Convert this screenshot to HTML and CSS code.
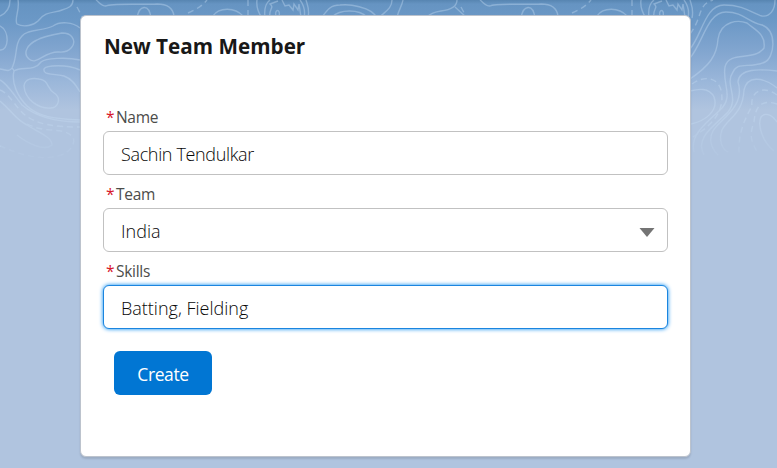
FILE: index.html
```html
<!DOCTYPE html>
<html lang="en">
<head>
<meta charset="utf-8">
<title>New Team Member</title>
<link rel="stylesheet" href="styles.css">
</head>
<body>
<svg class="contours" viewBox="0 0 777 170" aria-hidden="true">
  <defs>
    <linearGradient id="fade" x1="0" y1="0" x2="0" y2="170" gradientUnits="userSpaceOnUse">
      <stop offset="0" stop-color="#fff" stop-opacity=".9"/>
      <stop offset=".7" stop-color="#fff" stop-opacity=".8"/>
      <stop offset=".97" stop-color="#fff" stop-opacity=".1"/>
    </linearGradient>
    <mask id="m" maskUnits="userSpaceOnUse" x="0" y="0" width="777" height="170"><rect width="777" height="170" fill="url(#fade)"/></mask>
    <g id="top">
      <path d="M96 0C99 2 101 6 106 6C111 3 140 5 157 4C168 4 173 8 174 16M137 18C139 5 149 3 151 18M213 16C219 7 235 7 243 16M257 0C256 7 258 12 262 18M265 18C264 10 266 3 270 0M270 18C268 9 275 8 270 4L278 1M276 16C274 9 281 8 279 17M282 0L285 6L289 5L293 10L294 4L298 10L299 4L301 17M304 18C306 9 303 4 300 0M308 18C310 9 307 4 306 0"/>
      <path class="dashed" d="M77 7L85 22M188 13C197 9 202 6 207 0M248 0V18"/>
    </g>
    <path id="ridge" d="M322 17C328 9 331 5 340 5C352 4 356 6 360 7C368 9 374 12 377 18M332 17C340 9 359 9 367 17M392 0C392 9 384 12 380 17M403 0C402 6 399 9 397 17M457 0C457 8 449 10 441 11C434 12 430 14 427 17M455 7L466 17"/>
  </defs>
  <g mask="url(#m)">
    <path d="M0 16C7 13 10 7 10 0M18 0C20 10 14 19 17 24C24 28 34 25 38 21C45 11 55 13 62 10C69 8 73 6 73 0M0 26C10 31 9 51 0 50M80 28C73 22 60 21 53 26C44 31 27 29 22 36C14 44 18 56 12 68C9 73 4 69 0 69M62 33C51 35 42 37 37 40C28 44 22 53 29 59C37 66 44 51 59 52C70 53 77 44 72 37C70 34 66 33 62 33ZM80 60C67 57 45 58 41 62C34 72 22 66 14 71C11 83 18 97 27 106C38 116 52 119 80 120M80 70C67 64 46 65 44 69C43 76 53 73 64 76C73 79 77 87 80 92M24 86C25 78 33 78 39 79C49 80 47 89 54 93C62 98 58 108 51 108C39 109 25 100 24 86ZM0 80C7 83 16 98 22 105C35 116 53 122 80 122M0 101C13 112 15 119 27 125C38 132 52 137 52 145C44 152 27 143 17 135M12 68C14 70 14 71 14 71"/>
    <path class="dashed" d="M0 90C10 94 16 108 25 115C38 125 56 127 80 127M27 124C42 132 57 129 65 132C80 137 73 149 64 154C43 162 21 155 0 146"/>
    <path d="M690 49C702 35 705 5 724 5C744 5 752 13 762 16C770 17 775 10 775 0M690 58C703 43 707 12 726 12C744 12 747 22 762 25C778 31 774 58 765 62C749 69 738 61 733 72C724 85 740 97 728 112C716 125 694 137 704 155M690 79C709 66 717 56 718 39C721 20 739 20 747 23C755 30 766 34 764 48C754 62 729 50 725 67C722 85 735 97 719 111C702 126 690 137 694 152M690 91C698 89 709 87 714 97C719 111 705 121 691 124M777 71C760 69 739 68 738 82C746 107 719 120 713 131C709 138 710 147 718 155M777 88C762 76 747 76 744 90C743 114 728 118 722 130C718 141 723 150 728 152M777 122C771 113 764 113 761 117C757 126 763 142 774 151"/>
    <path class="dashed" d="M690 34C703 17 697 5 713 0M692 84C703 76 717 76 721 90C725 108 716 123 693 137M777 95C762 84 750 93 752 106C745 119 738 132 739 155M777 104C758 98 755 111 754 122C748 138 753 143 757 152"/>
    <use href="#top"/>
    <use href="#top" x="384"/>
    <use href="#ridge"/>
  </g>
</svg>
<main class="card">
  <h1>New Team Member</h1>
  <form>
    <label for="name"><span class="required">*</span>Name</label>
    <input id="name" class="control full-name" type="text" value="Sachin Tendulkar">
    <label for="team"><span class="required">*</span>Team</label>
    <div class="select-wrap">
      <select id="team" class="control"><option>India</option></select>
      <svg class="arrow" viewBox="0 0 16 9" aria-hidden="true"><path d="M.5 0h15L8 9Z"/></svg>
    </div>
    <label for="skills"><span class="required">*</span>Skills</label>
    <input id="skills" class="control focused" type="text" value="Batting, Fielding">
    <button type="button">Create</button>
  </form>
</main>
</body>
</html>
```
FILE: styles.css
```css
* { box-sizing: border-box; }

body {
  margin: 0;
  min-height: 468px;
  padding-top: 15px;
  overflow: hidden;
  font-family: "Segoe UI", "Open Sans", "Noto Sans", sans-serif;
  background: #b0c4df linear-gradient(#5785b1 0, #6694c2 4px, #6b98c6 20px, #81a5cf 50px, #9bb7da 82px, #b0c4df 110px) no-repeat;
}

.contours {
  position: absolute;
  inset: 0 auto auto 0;
  width: 777px;
  height: 170px;
  fill: none;
  stroke: #c9dff5;
  stroke-width: 1.4;
  opacity: .42;
}

.dashed { stroke-dasharray: 6 4; }

.card {
  position: relative;
  width: 611px;
  height: 442px;
  margin-left: 80px;
  padding: 14px 22px;
  border: 1px solid #bcc3cd;
  border-radius: 6px;
  background: #fff;
  box-shadow: 0 2px 2px rgba(0, 0, 0, .12);
}

h1 {
  width: max-content;
  margin: 0 0 43px 1px;
  font-size: 20.7px;
  line-height: 32px;
  font-weight: 700;
  color: #181818;
}

label {
  display: flex;
  height: 26px;
  padding-left: 3px;
  font-size: 15.5px;
  line-height: 25px;
  font-weight: 400;
  letter-spacing: -.3px;
  color: #4c4c4a;
}

.required { width: 10px; color: #d7152a; }

.control {
  display: block;
  width: 565px;
  height: 44px;
  margin: 0 0 7px;
  padding: 2px 17px 0;
  border: 1px solid #c1c1c1;
  border-radius: 6px;
  outline: none;
  appearance: none;
  background: #fff;
  font: 300 18px "Segoe UI", "Open Sans", "Noto Sans", sans-serif;
  color: #080808;
}

.full-name { letter-spacing: -.35px; }

.focused { border-color: #1b85df; box-shadow: 0 0 4px #0088f0; }

.select-wrap { position: relative; }

.arrow {
  position: absolute;
  top: 20px;
  right: 13px;
  width: 16px;
  height: 9px;
  fill: #747474;
}

button {
  display: block;
  width: 98px;
  height: 44px;
  margin: 22px 0 0 11px;
  padding: 2px 0 0;
  border: 0;
  border-radius: 6px;
  background: #0176d3;
  font: 400 17.5px "Segoe UI", "Open Sans", "Noto Sans", sans-serif;
  letter-spacing: -.4px;
  color: #fff;
}
```
